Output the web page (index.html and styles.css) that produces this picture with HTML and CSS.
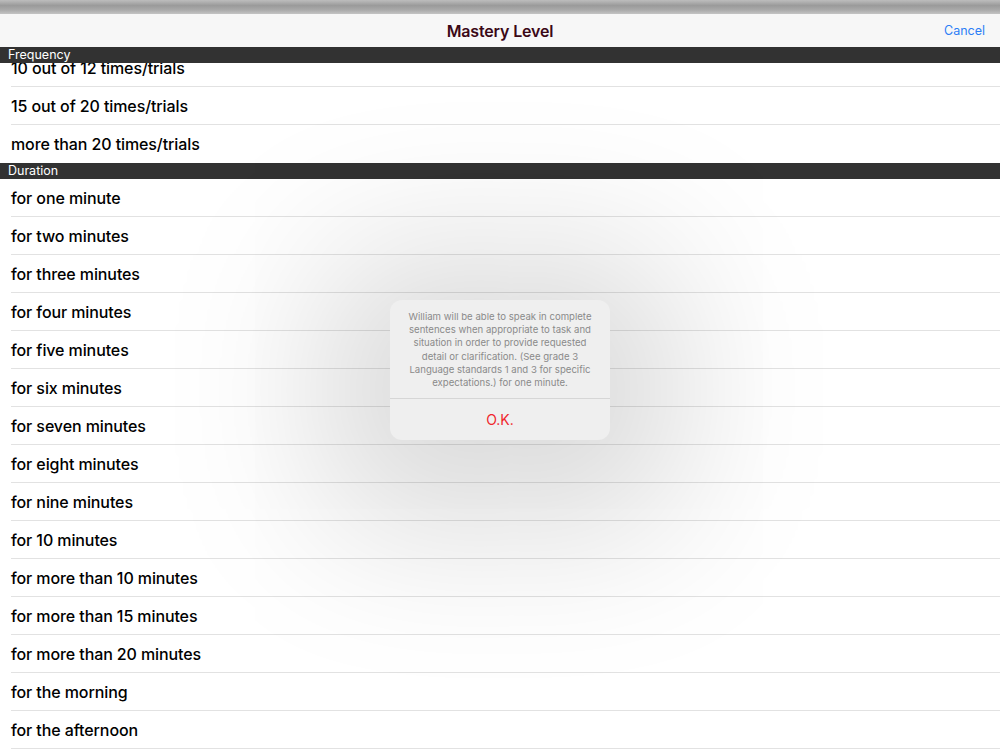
FILE: index.html
```html
<!DOCTYPE html>
<html><head>
  <meta charset="utf-8">
  <title>Mastery Level</title>
<link rel="stylesheet" href="styles.css">
</head>
<body>
<div class="statusbar"></div>
<div class="navbar">
 <div></div>
 <h1 class="navtitle">Mastery Level</h1>
 <div class="navright"><span class="cancel">Cancel</span></div>
</div>

<div class="table">
 <div class="sectionhead">Frequency</div>
 <ul class="rows first">
  <li class="row">10 out of 12 times/trials</li>
  <li class="row">15 out of 20 times/trials</li>
  <li class="row last">more than 20 times/trials</li>
 </ul>
 <div class="sectionhead">Duration</div>
 <ul class="rows">
  <li class="row">for one minute</li>
  <li class="row">for two minutes</li>
  <li class="row">for three minutes</li>
  <li class="row">for four minutes</li>
  <li class="row">for five minutes</li>
  <li class="row">for six minutes</li>
  <li class="row">for seven minutes</li>
  <li class="row">for eight minutes</li>
  <li class="row">for nine minutes</li>
  <li class="row">for 10 minutes</li>
  <li class="row">for more than 10 minutes</li>
  <li class="row">for more than 15 minutes</li>
  <li class="row">for more than 20 minutes</li>
  <li class="row">for the morning</li>
  <li class="row">for the afternoon</li>
 </ul>
</div><!-- table -->

<div class="overlay">
 <div class="alert">
  <p class="alertmsg">William will be able to speak in complete<br>sentences when appropriate to task and<br>situation in order to provide requested<br>detail or clarification. (See grade 3<br>Language standards 1 and 3 for specific<br>expectations.) for one minute.</p>
  <button class="alertbtn">O.K.</button>
 </div>
</div><!-- overlay -->
</body></html>
```
FILE: styles.css
```css
html, body{
  margin: 0;
  padding: 0;
  height: 100%;
  overflow: hidden;
}
body{
  font-family: Inter, "Noto Sans", sans-serif;
  background-color: #fff;
  color: #000;
}
div.statusbar{
  height: 14px;
  background: linear-gradient(#bdbdbd, #9a9a9a 40%, #a9a9a9 70%, #c4c4c4);
}
div.navbar{
  height: 33px;
  display: grid;
  grid-template-columns: 1fr auto 1fr;
  align-items: center;
  padding: 0 15px;
  background-color: #f7f7f7;
}
div.navright{
  display: flex;
  justify-content: flex-end;
}
h1.navtitle{
  margin: 0;
  font-size: 16px;
  font-weight: 600;
  color: #3b0816;
  letter-spacing: -0.15px;
}
span.cancel{
  font-size: 12.5px;
  color: #2b7ef6;
}
div.sectionhead{
  position: relative;
  z-index: 2;
  height: 16px;
  line-height: 16px;
  padding-left: 8px;
  font-size: 12.5px;
  color: #fff;
  background-color: #323232;
}
ul.rows{
  list-style: none;
  margin: 0;
  padding: 0;
}
ul.rows.first{
  margin-top: -14px;
}
li.row{
  box-sizing: border-box;
  height: 38px;
  margin-left: 11px;
  display: flex;
  align-items: center;
  font-size: 16px;
  font-weight: 500;
  letter-spacing: -0.1px;
  border-bottom: 1px solid #e2e2e2;
}
li.row.last{
  border-bottom-color: transparent;
}
div.overlay{
  position: absolute;
  top: 0;
  left: 0;
  right: 0;
  bottom: 0;
  z-index: 5;
  display: flex;
  justify-content: center;
  align-items: flex-start;
  padding-top: 300px;
}
div.alert{
  width: 220px;
  height: 140px;
  border-radius: 12px;
  background-color: #efefef;
  box-shadow: 0 20px 160px 70px rgba(0,0,0,0.15);
  display: flex;
  flex-direction: column;
  text-align: center;
}
p.alertmsg{
  margin: 0;
  padding: 10px 8px 9px;
  font-size: 9.6px;
  line-height: 13.2px;
  color: #8a8a8a;
  border-bottom: 1px solid #d6d6d6;
}
button.alertbtn{
  flex: 1;
  border: none;
  background: none;
  font-family: inherit;
  font-size: 14px;
  color: #f0262c;
  padding: 0;
}
```
